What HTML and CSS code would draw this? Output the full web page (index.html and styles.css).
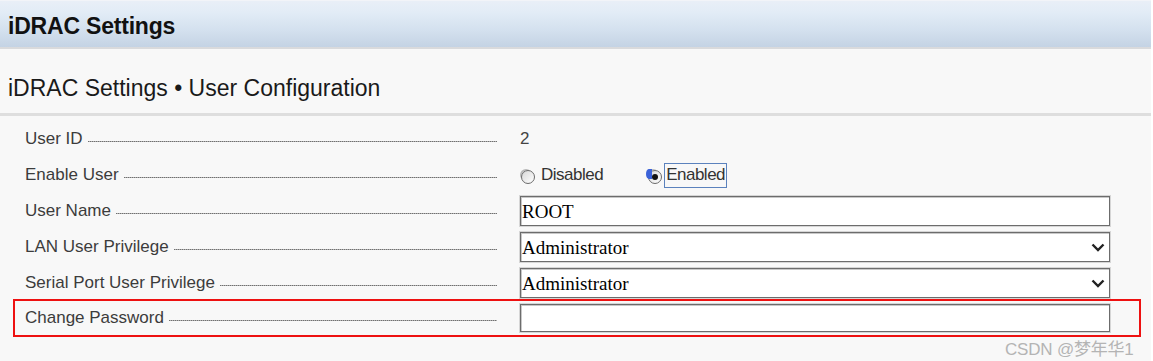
FILE: index.html
```html
<!DOCTYPE html>
<html>
<head>
<meta charset="utf-8">
<link rel="stylesheet" href="styles.css">
</head>
<body>
<div class="page">
  <div class="header"><h1 class="title">iDRAC Settings</h1></div>
  <div class="subhead"><h2 class="subtitle">iDRAC Settings • User Configuration</h2></div>
  <div class="form">
    <div class="row">
      <div class="label"><span class="ltext">User ID</span><span class="leader"></span></div>
      <div class="value"><span class="plain">2</span></div>
    </div>
    <div class="row">
      <div class="label"><span class="ltext">Enable User</span><span class="leader"></span></div>
      <div class="value radios">
        <label class="radio"><span class="dot"></span><span class="rtext">Disabled</span></label>
        <label class="radio on"><span class="dot"><span class="blue"></span><span class="pip"></span></span><span class="rtext focus">Enabled</span></label>
      </div>
    </div>
    <div class="row">
      <div class="label"><span class="ltext">User Name</span><span class="leader"></span></div>
      <div class="value"><input class="field" type="text" value="ROOT"></div>
    </div>
    <div class="row">
      <div class="label"><span class="ltext">LAN User Privilege</span><span class="leader"></span></div>
      <div class="value selwrap">
        <select class="field sel"><option>Administrator</option></select>
        <svg class="chev" width="14" height="9" viewBox="0 0 14 9"><path d="M1.5 1.5 L7 7 L12.5 1.5" fill="none" stroke="#222" stroke-width="2.4"/></svg>
      </div>
    </div>
    <div class="row">
      <div class="label"><span class="ltext">Serial Port User Privilege</span><span class="leader"></span></div>
      <div class="value selwrap">
        <select class="field sel"><option>Administrator</option></select>
        <svg class="chev" width="14" height="9" viewBox="0 0 14 9"><path d="M1.5 1.5 L7 7 L12.5 1.5" fill="none" stroke="#222" stroke-width="2.4"/></svg>
      </div>
    </div>
    <div class="row marked">
      <div class="label"><span class="ltext">Change Password</span><span class="leader"></span></div>
      <div class="value"><input class="field pw" type="password" value=""></div>
    </div>
  </div>
  <div class="watermark">CSDN @梦年华1</div>
</div>
</body>
</html>
```

FILE: styles.css
```css
html, body {
  margin: 0;
  padding: 0;
  background: #ffffff;
}
.page {
  position: relative;
  width: 1151px;
  height: 361px;
  background: #f8f8f8;
  font-family: "Liberation Sans", Arial, sans-serif;
  overflow: hidden;
}
.header {
  height: 46px;
  border-top: 1px solid #f2f4f8;
  border-bottom: 2px solid #d9dadc;
  background: linear-gradient(to bottom, #e9eff7 0%, #e2ecf6 25%, #d3e0ee 65%, #c4d3e4 100%);
  display: flex;
  align-items: center;
  box-sizing: content-box;
}
.title {
  margin: 0 0 0 8px;
  font-size: 23px;
  font-weight: bold;
  color: #111;
  letter-spacing: -0.2px;
  padding-top: 5px;
}
.subhead {
  height: 64px;
  border-bottom: 3px solid #dedede;
  display: flex;
  align-items: center;
}
.subtitle {
  margin: 0 0 0 8px;
  font-size: 23px;
  font-weight: normal;
  color: #1a1a1a;
  padding-top: 14px;
}
.form {
  padding: 5px 0 0 15px;
  display: flex;
  flex-direction: column;
}
.row {
  width: 1124px;
  height: 36px;
  box-sizing: border-box;
  padding-left: 10px;
  display: grid;
  grid-template-columns: 472px 590px;
  column-gap: 23px;
  align-items: center;
}
.row.marked {
  outline: 2px solid #ee1111;
  height: 34px;
  margin-top: 0;
}
.label {
  display: flex;
  align-items: center;
  font-size: 17px;
  color: #3c3c3c;
  letter-spacing: 0;
}
.ltext {
  white-space: nowrap;
}
.leader {
  flex: 1;
  height: 1px;
  margin: 4px 0 0 5px;
  background: repeating-linear-gradient(to right, #707070 0, #707070 1px, #b0b0b0 1px, #b0b0b0 2px);
}
.value {
  display: flex;
  align-items: center;
  font-size: 17px;
  color: #444;
}
.plain {
  letter-spacing: -0.3px;
}
.radio {
  display: flex;
  align-items: center;
  letter-spacing: -0.5px;
  color: #333;
}
.radio + .radio {
  margin-left: 40px;
}
.dot {
  position: relative;
  width: 12px;
  height: 12px;
  border: 1px solid #6a6a6a;
  border-radius: 50%;
  background: linear-gradient(135deg, #d8d8d8, #ffffff);
  margin: 4px 6px 0 1px;
  box-shadow: -2px -2px 0 -1px #b8b8b8;
}
.blue {
  position: absolute;
  left: -3px;
  top: -2px;
  width: 6px;
  height: 10px;
  border-radius: 50% 0 0 50%;
  background: #3b62d8;
}
.pip {
  position: absolute;
  left: 3px;
  top: 3px;
  width: 6px;
  height: 6px;
  border-radius: 50%;
  background: #111;
}
.radio.on .dot {
  margin-right: 2px;
  margin-left: 5px;
}
.rtext.focus {
  border: 1px solid #5b82bd;
  padding: 1px 1px 2px 1px;
}
.field {
  width: 590px;
  height: 30px;
  box-sizing: border-box;
  border: 1px solid #6c6c6c;
  box-shadow: inset 1px 1px 0 #c8c8c8, 0 0 0 1px #d6d6d6;
  background: #fff;
  font-family: "Liberation Serif", "Times New Roman", serif;
  font-size: 19px;
  color: #000;
  padding: 1px 1px 0 1px;
  margin: 0;
  outline: none;
  border-radius: 0;
}
.field.pw {
  height: 28px;
}
.selwrap {
  position: relative;
}
.sel {
  appearance: none;
  -webkit-appearance: none;
}
.chev {
  position: absolute;
  right: 5px;
  top: 11px;
  pointer-events: none;
}
.watermark {
  position: absolute;
  left: 1005px;
  top: 335px;
  font-family: "Liberation Sans", "Noto Sans CJK SC", sans-serif;
  font-size: 17px;
  color: #b4b4b4;
  letter-spacing: -0.2px;
}
```
